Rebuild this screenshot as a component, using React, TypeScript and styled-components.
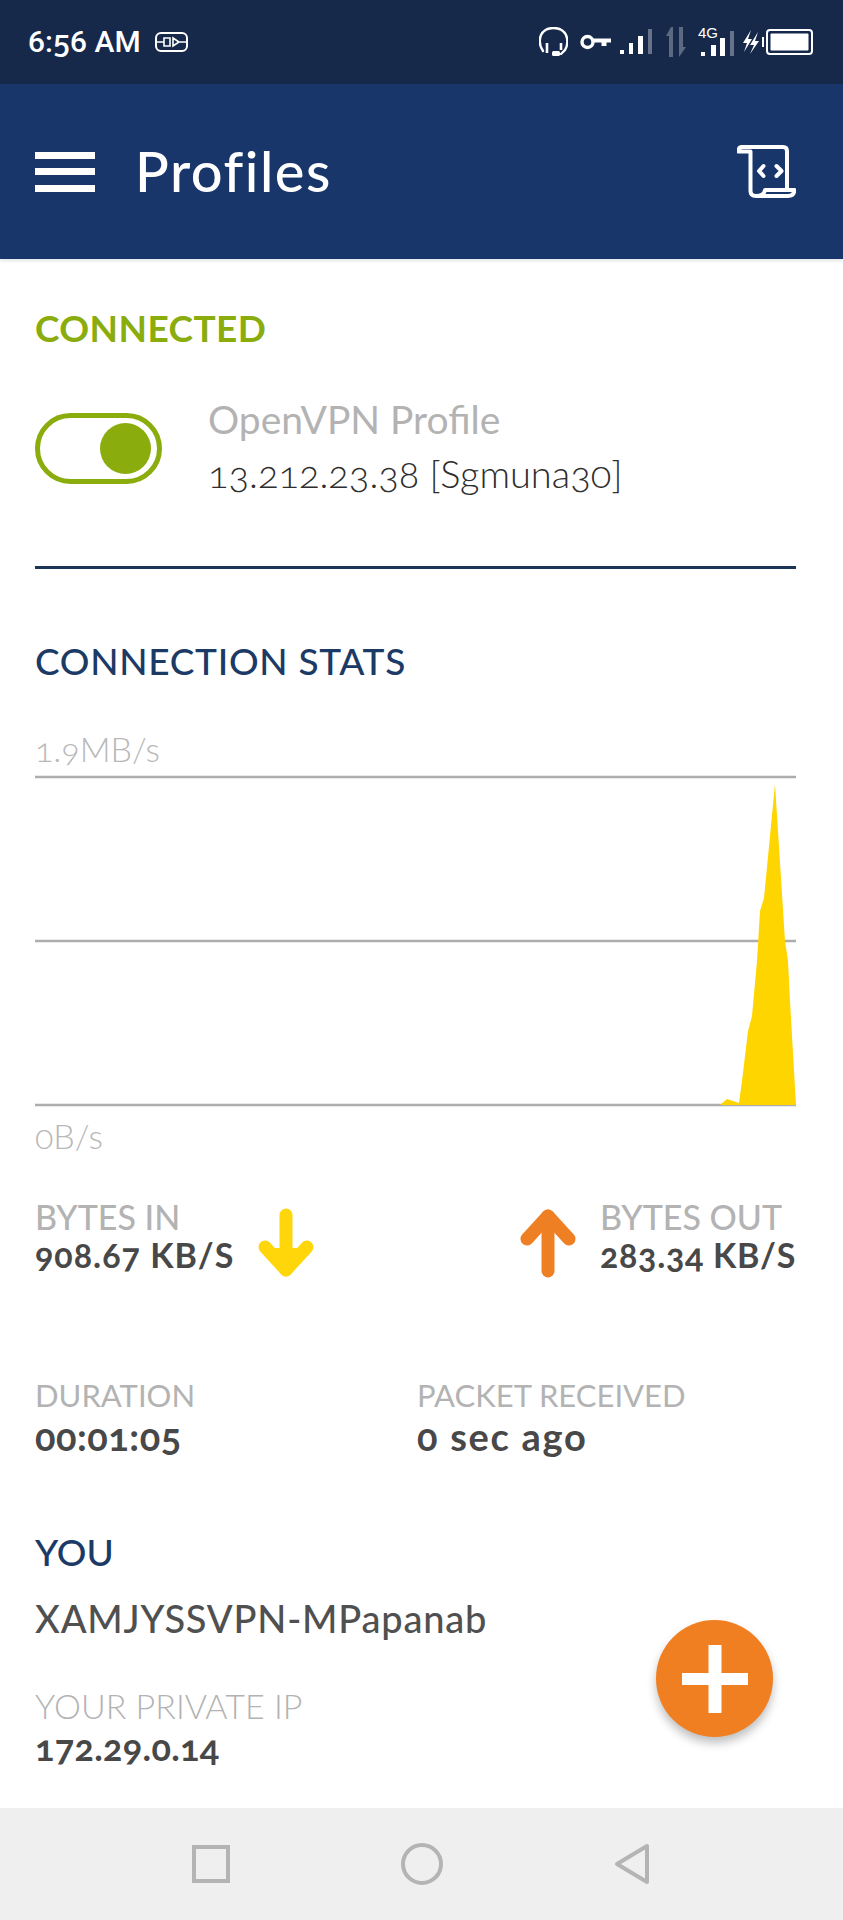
import React from "react";
import styled, { createGlobalStyle } from "styled-components";

const GlobalStyle = createGlobalStyle`
  html, body {
    margin: 0;
    padding: 0;
    background: #ffffff;
  }
  * {
    box-sizing: border-box;
  }
`;

const Page = styled.div`
  width: 843px;
  height: 1920px;
  display: flex;
  flex-direction: column;
  overflow: hidden;
  font-family: "Lato", "Open Sans", sans-serif;
  font-feature-settings: "onum" 1;
`;

const StatusBar = styled.div`
  height: 84px;
  flex: none;
  display: flex;
  align-items: center;
  justify-content: space-between;
  padding: 0 30px 0 28px;
  background: #16294a;
  color: #ffffff;
`;

const StatusLeft = styled.div`
  display: flex;
  align-items: center;
  gap: 14px;
`;

const Clock = styled.span`
  font-family: "Roboto", sans-serif;
  font-size: 30px;
  font-weight: 500;
  line-height: 34px;
`;

const StatusRight = styled.div`
  display: flex;
  align-items: center;
`;

const StatusSvg = styled.svg<{ $left?: number }>`
  display: block;
  flex: none;
  margin-left: ${(p) => p.$left ?? 0}px;
`;

const Header = styled.header`
  height: 175px;
  flex: none;
  display: flex;
  align-items: center;
  padding: 0 47px 0 35px;
  background: #19366b;
  box-shadow: 0 2px 3px rgba(20, 40, 60, 0.12);
  color: #ffffff;
  position: relative;
`;

const Burger = styled.div`
  width: 60px;
  height: 40px;
  display: flex;
  flex-direction: column;
  justify-content: space-between;
  flex: none;
  span {
    display: block;
    height: 7px;
    background: #ffffff;
  }
`;

const Title = styled.h1`
  flex: 1;
  margin: 0 0 2px 40px;
  font-size: 56px;
  font-weight: 500;
  letter-spacing: 1.5px;
  line-height: 64px;
`;

const Main = styled.main`
  flex: 1;
  position: relative;
  padding: 49px 47px 0 35px;
`;

const Heading = styled.div<{ $color: string; $top?: number; $weight?: number; $spacing?: number }>`
  margin-top: ${(p) => p.$top ?? 0}px;
  color: ${(p) => p.$color};
  font-size: 37px;
  font-weight: ${(p) => p.$weight ?? 500};
  letter-spacing: ${(p) => p.$spacing ?? 0}px;
  line-height: 40px;
`;

const ProfileRow = styled.div`
  margin-top: 44px;
  display: flex;
  align-items: center;
  gap: 46px;
`;

const Toggle = styled.div`
  width: 127px;
  height: 71px;
  flex: none;
  display: flex;
  align-items: center;
  justify-content: flex-end;
  padding-right: 6px;
  border: 5px solid #8aac0c;
  border-radius: 36px;
  &::after {
    content: "";
    width: 51px;
    height: 51px;
    border-radius: 50%;
    background: #8aac0c;
  }
`;

const ProfileText = styled.div`
  padding-bottom: 5px;
`;

const ProfileName = styled.div`
  color: #b3b3b3;
  font-size: 39px;
  font-weight: 400;
  line-height: 55px;
`;

const ProfileHost = styled.div`
  color: #2e2e2e;
  font-size: 38px;
  font-weight: 300;
  line-height: 52px;
`;

const Divider = styled.hr`
  margin: 62px 0 0;
  height: 3px;
  border: 0;
  background: #1c3557;
`;

const ScaleLabel = styled.div<{ $top: number; $bottom?: number }>`
  margin: ${(p) => p.$top}px 0 ${(p) => p.$bottom ?? 0}px;
  color: #b8b8b8;
  font-size: 34px;
  font-weight: 300;
  line-height: 40px;
`;

const Chart = styled.svg`
  display: block;
  width: 761px;
  height: 336px;
`;

const BytesRow = styled.div`
  margin-top: 41px;
  display: flex;
  justify-content: space-between;
`;

const BytesGroup = styled.div`
  display: flex;
  align-items: flex-start;
  gap: 24px;
`;

const ArrowIcon = styled.svg`
  display: block;
  flex: none;
  margin-top: 11px;
`;

const Label = styled.div<{ $weight?: number; $size?: number }>`
  color: #b3b3b3;
  font-size: ${(p) => p.$size ?? 34}px;
  font-weight: ${(p) => p.$weight ?? 500};
  line-height: 40px;
`;

const Value = styled.div<{ $top?: number; $size?: number; $spacing?: number }>`
  margin-top: ${(p) => p.$top ?? -2}px;
  color: #484848;
  font-size: ${(p) => p.$size ?? 34}px;
  font-weight: 700;
  letter-spacing: ${(p) => p.$spacing ?? 1}px;
  line-height: 40px;
  white-space: nowrap;
`;

const InfoGrid = styled.div`
  margin-top: 97px;
  display: grid;
  grid-template-columns: 382px 1fr;
`;

const PeerName = styled.div`
  margin-top: 26px;
  color: #505050;
  font-size: 38px;
  font-weight: 500;
  letter-spacing: 0.8px;
  line-height: 40px;
`;

const PrivateBlock = styled.div`
  margin-top: 48px;
`;

const Fab = styled.button`
  position: absolute;
  right: 70px;
  bottom: 71px;
  width: 117px;
  height: 117px;
  padding: 0;
  display: flex;
  align-items: center;
  justify-content: center;
  border: 0;
  border-radius: 50%;
  background: #f07f22;
  box-shadow: 0 6px 10px rgba(0, 0, 0, 0.25);
`;

const NavBar = styled.nav`
  height: 112px;
  flex: none;
  display: flex;
  align-items: center;
  justify-content: space-between;
  padding: 0 193px 0 192px;
  background: #efefef;
`;

const HeadsetIcon = () => (
  <StatusSvg width="29" height="30" viewBox="0 0 29 30" fill="none" stroke="#fff" strokeWidth="2.4">
    <path d="M4 24 C0 18 0 13 2 8 C5 2 10 1 14.5 1 C19 1 24 2 27 8 C29 13 29 18 26 23 L22 27" strokeLinecap="round" />
    <path d="M8 16 V26 M22 16 V23" strokeWidth="2.6" />
    <rect x="13" y="24" width="8" height="5" rx="1.5" fill="#fff" stroke="none" />
  </StatusSvg>
);

const KeyIcon = () => (
  <StatusSvg $left={12} width="31" height="16" viewBox="0 0 31 16" fill="none" stroke="#fff">
    <circle cx="7.5" cy="8" r="5.5" strokeWidth="3.4" />
    <path d="M13 6.5 H31" strokeWidth="4" />
    <path d="M24 6 V12" strokeWidth="5" />
  </StatusSvg>
);

const SignalIcon = () => (
  <StatusSvg $left={9} width="32" height="26" viewBox="0 0 32 26" fill="#fff">
    <rect x="0" y="21" width="4" height="4" />
    <rect x="9" y="14" width="4" height="11" />
    <rect x="18" y="7" width="5" height="18" />
    <rect x="28" y="0" width="4" height="25" opacity="0.35" />
  </StatusSvg>
);

const DataArrowsIcon = () => (
  <StatusSvg $left={13} width="22" height="30" viewBox="0 0 22 30" fill="#fff" opacity="0.3">
    <path d="M6 0 L1 9 H4 V30 H8 V0 Z" />
    <path d="M14 0 V30 L21 20 H18 V0 Z" />
  </StatusSvg>
);

const Signal4GIcon = () => (
  <StatusSvg $left={11} width="37" height="36" viewBox="0 0 37 36" fill="#fff">
    <text x="0" y="14" fontFamily="Liberation Sans, sans-serif" fontSize="15">
      4G
    </text>
    <rect x="3" y="28" width="4" height="4" />
    <rect x="13" y="21" width="5" height="11" />
    <rect x="22" y="14" width="5" height="18" />
    <rect x="32" y="7" width="4" height="25" opacity="0.35" />
  </StatusSvg>
);

const BoltIcon = () => (
  <StatusSvg $left={7} width="18" height="24" viewBox="0 0 18 24" fill="#fff">
    <path d="M9 0 L1 13 H5 L2 22 L10 9 H6 Z" />
    <path d="M16 2 L8 15 H12 L8 24 L17 11 H13 Z" />
  </StatusSvg>
);

const BatteryIcon = () => (
  <StatusSvg $left={2} width="51" height="26" viewBox="0 0 51 26" fill="none">
    <rect x="0" y="8" width="2" height="10" fill="#fff" />
    <rect x="5" y="1" width="45" height="24" rx="3" stroke="#fff" strokeWidth="2" />
    <rect x="8.5" y="4.5" width="38" height="17" rx="1" fill="#fff" />
  </StatusSvg>
);

const PlugIcon = () => (
  <svg width="33" height="20" viewBox="0 0 33 20" fill="none" stroke="#fff" strokeWidth="1.6">
    <rect x="1" y="1" width="31" height="18" rx="5" strokeWidth="2" />
    <path d="M1 10 H9 M24 10 H32 M9 6 V14 H15 V6 Z M18 6 L24 10 L18 14 Z" />
  </svg>
);

const ScrollIcon = () => (
  <svg width="59" height="53" viewBox="0 0 59 53" fill="none" stroke="#fff" strokeWidth="4" strokeLinejoin="round" strokeLinecap="round">
    <path d="M5 2 H46 Q50 2 50 6 V44" />
    <path d="M5 2 Q1.5 2 1.5 6.5 H13.5 V46 Q13.5 51 19 51 H51 Q57 51 57.5 45 H28 Q27 51 19 51" />
    <path d="M26.5 21 L22 26 L26.5 31 M39.5 21 L44.5 26 L39.5 31" />
  </svg>
);

const DownArrow = () => (
  <ArrowIcon width="56" height="70" viewBox="0 0 56 70" fill="none" stroke="#ffd60a" strokeWidth="13" strokeLinecap="round" strokeLinejoin="round">
    <path d="M28 7 V62" />
    <path d="M7 40 L28 62 L49 40 Z" fill="#ffd60a" stroke="none" />
    <path d="M7 39 L28 62 L49 39" />
  </ArrowIcon>
);

const UpArrow = () => (
  <ArrowIcon width="56" height="70" viewBox="0 0 56 70" fill="none" stroke="#ef7f23" strokeWidth="13" strokeLinecap="round" strokeLinejoin="round">
    <path d="M28 63 V8" />
    <path d="M7 31 L28 8 L49 31" />
  </ArrowIcon>
);

const App: React.FC = () => {
  return (
    <Page>
      <GlobalStyle />
      <StatusBar>
        <StatusLeft>
          <Clock>6:56 AM</Clock>
          <PlugIcon />
        </StatusLeft>
        <StatusRight>
          <HeadsetIcon />
          <KeyIcon />
          <SignalIcon />
          <DataArrowsIcon />
          <Signal4GIcon />
          <BoltIcon />
          <BatteryIcon />
        </StatusRight>
      </StatusBar>

      <Header>
        <Burger>
          <span />
          <span />
          <span />
        </Burger>
        <Title>Profiles</Title>
        <ScrollIcon />
      </Header>

      <Main>
        <Heading $color="#8aac0c" $weight={700} $spacing={0.4}>
          CONNECTED
        </Heading>
        <ProfileRow>
          <Toggle />
          <ProfileText>
            <ProfileName>OpenVPN Profile</ProfileName>
            <ProfileHost>13.212.23.38 [Sgmuna30]</ProfileHost>
          </ProfileText>
        </ProfileRow>
        <Divider />

        <Heading $color="#1c3a66" $top={72} $spacing={0.7}>
          CONNECTION STATS
        </Heading>
        <ScaleLabel $top={48} $bottom={3}>
          1.9MB/s
        </ScaleLabel>
        <Chart viewBox="0 0 761 336">
          <g stroke="#adadad" strokeWidth="2.5">
            <line x1="0" y1="5" x2="761" y2="5" />
            <line x1="0" y1="169" x2="761" y2="169" />
            <line x1="0" y1="333" x2="761" y2="333" />
          </g>
          <path
            fill="#ffd500"
            d="M685 333 L692 327 L698 329 L704 331 L707 309 L713 259 L717 244 L722 189 L725 139 L729 126 L740 12 L750 169 L753 189 L755 229 L761 333 Z"
          />
        </Chart>
        <ScaleLabel $top={8}>0B/s</ScaleLabel>

        <BytesRow>
          <BytesGroup>
            <div>
              <Label>BYTES IN</Label>
              <Value>908.67 KB/S</Value>
            </div>
            <DownArrow />
          </BytesGroup>
          <BytesGroup>
            <UpArrow />
            <div>
              <Label>BYTES OUT</Label>
              <Value $spacing={0.7}>283.34 KB/S</Value>
            </div>
          </BytesGroup>
        </BytesRow>

        <InfoGrid>
          <div>
            <Label $weight={400} $size={31}>
              DURATION
            </Label>
            <Value $top={1} $size={38} $spacing={0.5}>
              00:01:05
            </Value>
          </div>
          <div>
            <Label $weight={400} $size={31}>
              PACKET RECEIVED
            </Label>
            <Value $top={1} $size={38} $spacing={1.7}>
              0 sec ago
            </Value>
          </div>
        </InfoGrid>

        <Heading $color="#1c3a66" $top={76}>
          YOU
        </Heading>
        <PeerName>XAMJYSSVPN-MPapanab</PeerName>
        <PrivateBlock>
          <Label $weight={300}>YOUR PRIVATE IP</Label>
          <Value $top={1} $size={36} $spacing={0.3}>
            172.29.0.14
          </Value>
        </PrivateBlock>

        <Fab>
          <svg width="66" height="68" viewBox="0 0 66 68" fill="#fff">
            <rect x="26.5" y="0" width="13" height="68" />
            <rect x="0" y="28" width="66" height="12" />
          </svg>
        </Fab>
      </Main>

      <NavBar>
        <svg width="38" height="38" viewBox="0 0 38 38" fill="none" stroke="#b4b4b4" strokeWidth="4">
          <rect x="2" y="2" width="34" height="34" />
        </svg>
        <svg width="42" height="42" viewBox="0 0 42 42" fill="none" stroke="#b4b4b4" strokeWidth="4">
          <circle cx="21" cy="21" r="19" />
        </svg>
        <svg width="36" height="42" viewBox="0 0 36 42" fill="none" stroke="#b4b4b4" strokeWidth="4" strokeLinejoin="round">
          <path d="M33 3 V39 L3 21 Z" />
        </svg>
      </NavBar>
    </Page>
  );
};

export default App;
